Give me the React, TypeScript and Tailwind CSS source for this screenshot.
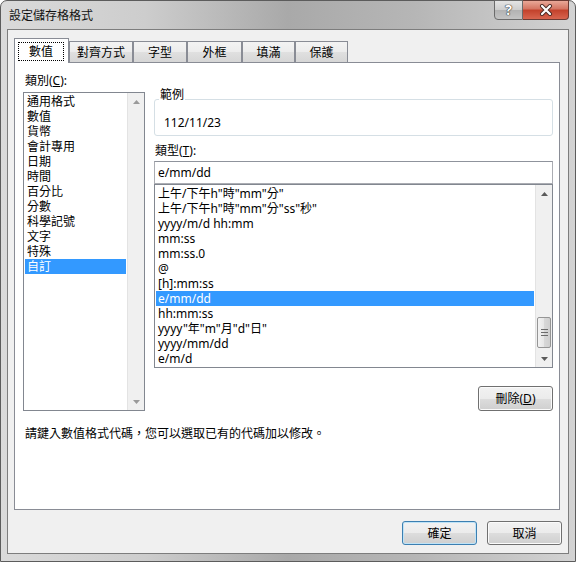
import React from 'react';

const categories = ['通用格式', '數值', '貨幣', '會計專用', '日期', '時間', '百分比', '分數', '科學記號', '文字', '特殊', '自訂'];

const formats = [
  '上午/下午h"時"mm"分"',
  '上午/下午h"時"mm"分"ss"秒"',
  'yyyy/m/d hh:mm',
  'mm:ss',
  'mm:ss.0',
  '@',
  '[h]:mm:ss',
  'e/mm/dd',
  'hh:mm:ss',
  'yyyy"年"m"月"d"日"',
  'yyyy/mm/dd',
  'e/m/d',
];

const tabs = [
  { label: '對齊方式', w: 'w-[64px]' },
  { label: '字型', w: 'w-[54px]' },
  { label: '外框', w: 'w-[55px]' },
  { label: '填滿', w: 'w-[53px]' },
  { label: '保護', w: 'w-[53px]' },
];

function Arrow({ up, color }: { up?: boolean; color: string }) {
  return (
    <svg width="7" height="4" viewBox="0 0 7 4">
      <polygon points={up ? '3.5,0 7,4 0,4' : '0,0 7,0 3.5,4'} fill={color} />
    </svg>
  );
}

function ScrollBar({ thumb, arrowColor }: { thumb?: boolean; arrowColor: string }) {
  return (
    <div className="w-[17px] flex flex-col bg-[#f0f0f0] border-l border-[#e3e3e3]">
      <div className="h-[17px] flex items-center justify-center">
        <Arrow up color={arrowColor} />
      </div>
      <div className="flex-1 flex flex-col">
        {thumb && (
          <div className="mt-[115px] mx-px h-[31px] rounded-[2px] border border-[#959595] bg-[linear-gradient(90deg,#f3f3f3,#e6e6e6_50%,#d8d8d8_50%,#cfcfcf)] flex flex-col items-center justify-center gap-[2px]">
            <div className="w-[7px] h-px bg-[#6b6b6b]" />
            <div className="w-[7px] h-px bg-[#6b6b6b]" />
            <div className="w-[7px] h-px bg-[#6b6b6b]" />
          </div>
        )}
      </div>
      <div className="h-[17px] flex items-center justify-center">
        <Arrow color={arrowColor} />
      </div>
    </div>
  );
}

function Btn({ children, primary, className = '' }: { children: React.ReactNode; primary?: boolean; className?: string }) {
  return (
    <div
      className={`w-[75px] flex items-center justify-center rounded-[3px] border bg-[linear-gradient(#f2f2f2_0%,#ebebeb_50%,#dddddd_50%,#cfcfcf_100%)] ${
        primary ? 'border-[#3c7fb1] shadow-[inset_0_0_0_1px_#bfe3f7]' : 'border-[#707070] shadow-[inset_0_0_0_1px_#fbfbfb]'
      } ${className}`}
    >
      {children}
    </div>
  );
}

export default function App() {
  return (
    <div className="w-[576px] h-[562px] overflow-hidden font-['Noto_Sans','Noto_Sans_CJK_TC',sans-serif] text-[12px] leading-[15px] text-black">
      <div className="w-full h-full flex flex-col border border-[#5c5c5c] rounded-t-[7px] bg-[linear-gradient(90deg,#dadada_0%,#cdcdcd_25%,#a9a9a9_50%,#b6b6b6_72%,#d3d3d3_100%)]">
        {/* title bar */}
        <div className="h-[28px] flex items-start">
          <div className="ml-[8px] mt-[7px] text-[#111]">設定儲存格格式</div>
          <div className="ml-auto mr-[6px] -mt-px flex h-[20px]">
            <div className="w-[29px] flex items-center justify-center border border-[#6b6b6b] rounded-bl-[4px] bg-[linear-gradient(#e4e4e4,#cdcdcd_50%,#b2b2b2_50%,#c4c4c4)]">
              <span className="font-bold text-[14px] leading-[14px] text-white [text-shadow:0_0_1px_#333,0_0_1px_#333,0_0_1px_#333]">?</span>
            </div>
            <div className="w-[46px] flex items-center justify-center border border-l-0 border-[#6b3a33] rounded-br-[4px] bg-[linear-gradient(#e9a898,#d47461_45%,#c2412b_50%,#d8654f)]">
              <svg width="14" height="12" viewBox="0 0 14 12">
                <path d="M3 2 L11 10 M11 2 L3 10" stroke="#4a2a24" strokeWidth="4" strokeLinecap="round" />
                <path d="M3 2 L11 10 M11 2 L3 10" stroke="#ffffff" strokeWidth="2.2" strokeLinecap="round" />
              </svg>
            </div>
          </div>
        </div>

        {/* client area */}
        <div className="mx-[6px] mb-[7px] h-[525px] border border-[#7d7d7d] bg-[#f0f0f0] flex flex-col pl-[6px] pr-[8px] pt-[8px]">
          {/* tabs */}
          <div className="relative z-10 -mb-px flex items-end h-[25px]">
            <div className="w-[55px] h-[25px] bg-white border border-b-0 border-[#898c95] flex pt-[3px] pl-[3px] pr-[4px] pb-[2px]">
              <div className="flex-1 border border-dotted border-black flex items-center justify-center">數值</div>
            </div>
            {tabs.map((t) => (
              <div
                key={t.label}
                className={`${t.w} h-[22px] border border-[#898c95] bg-[linear-gradient(#f3f3f3,#ececec_50%,#e0e0e0_50%,#d6d6d6)] flex items-center justify-center`}
              >
                {t.label}
              </div>
            ))}
          </div>

          {/* panel */}
          <div className="h-[448px] border border-[#898c95] bg-white pl-[8px] pr-[6px] pt-[10px] flex flex-col">
            <div className="ml-[2px]">
              類別(<span className="underline">C</span>):
            </div>
            <div className="mt-[4px] flex gap-[9px]">
              {/* category list */}
              <div className="w-[122px] h-[319px] border border-[#828790] flex">
                <div className="flex-1 px-px pt-px">
                  {categories.map((c, i) => (
                    <div key={c} className={`h-[15px] pl-[2px] ${i === categories.length - 1 ? 'bg-[#3399ff] text-white' : ''}`}>
                      {c}
                    </div>
                  ))}
                </div>
                <ScrollBar arrowColor="#9a9a9a" />
              </div>

              {/* right column */}
              <div className="w-[399px] flex flex-col">
                <div className="relative mt-[7px] h-[37px] border border-[#d5dfe5] rounded-[3px] pl-[9px] pt-[15px]">
                  <div className="absolute left-[4px] -top-[13px] bg-white px-px">範例</div>
                  112/11/23
                </div>
                <div className="mt-[7px] ml-px">
                  類型(<span className="underline">T</span>):
                </div>
                <div className="mt-[3px] h-[23px] border border-[#abadb3] border-t-[#8f939c] pl-[3px] flex items-center">e/mm/dd</div>
                <div className="h-[184px] border border-[#828790] flex">
                  <div className="flex-1 px-px pt-px">
                    {formats.map((f) => (
                      <div key={f} className={`h-[15px] pl-[2px] whitespace-pre ${f === 'e/mm/dd' ? 'bg-[#3399ff] text-white' : ''}`}>
                        {f}
                      </div>
                    ))}
                  </div>
                  <ScrollBar thumb arrowColor="#5a5a5a" />
                </div>
                <Btn className="mt-[18px] h-[25px] self-end">
                  刪除(<span className="underline">D</span>)
                </Btn>
              </div>
            </div>
            <div className="mt-[15px] ml-[2px]">請鍵入數值格式代碼，您可以選取已有的代碼加以修改。</div>
          </div>

          {/* bottom buttons */}
          <div className="mt-[11px] -mr-[2px] flex justify-end gap-[10px]">
            <Btn primary className="h-[24px]">確定</Btn>
            <Btn className="h-[24px] w-[74px]">取消</Btn>
          </div>
        </div>
      </div>
    </div>
  );
}
